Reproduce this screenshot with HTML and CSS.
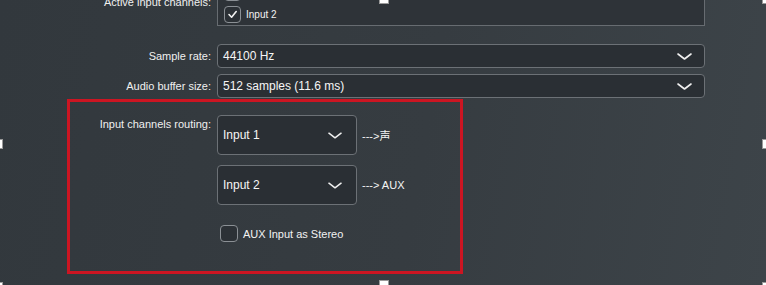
FILE: index.html
```html
<!DOCTYPE html>
<html lang="en">
<head>
  <meta charset="UTF-8" />
  <meta name="viewport" content="width=device-width, initial-scale=1.0" />
  <title>Audio Settings</title>
  <link rel="stylesheet" href="styles.css">
</head>
<body>

  <div class="prefs">
    <div class="row row-active">
      <div class="label label-top">Active input channels:</div>
      <div class="channel-box">
        <label class="check-row">
          <span class="box checked">
            <svg viewBox="0 0 17 17" width="17" height="17"><polyline points="5,8.5 7.6,11.2 12.2,5.6" fill="none" stroke="#f2f2f2" stroke-width="1.6" stroke-linecap="round" stroke-linejoin="round"/></svg>
          </span>
          <span class="check-text small">Input 1</span>
        </label>
        <label class="check-row">
          <span class="box checked">
            <svg viewBox="0 0 17 17" width="17" height="17"><polyline points="5,8.5 7.6,11.2 12.2,5.6" fill="none" stroke="#f2f2f2" stroke-width="1.6" stroke-linecap="round" stroke-linejoin="round"/></svg>
          </span>
          <span class="check-text small">Input 2</span>
        </label>
      </div>
    </div>

    <div class="row row-rate">
      <div class="label">Sample rate:</div>
      <div class="select">
        <span>44100 Hz</span>
        <svg class="chevron" viewBox="0 0 15 7" width="15" height="7"><polyline points="1,1 7.5,6 14,1" fill="none" stroke="#f0f0f0" stroke-width="1.6" stroke-linecap="round" stroke-linejoin="round"/></svg>
      </div>
    </div>

    <div class="row row-buffer">
      <div class="label">Audio buffer size:</div>
      <div class="select">
        <span>512 samples (11.6 ms)</span>
        <svg class="chevron" viewBox="0 0 15 7" width="15" height="7"><polyline points="1,1 7.5,6 14,1" fill="none" stroke="#f0f0f0" stroke-width="1.6" stroke-linecap="round" stroke-linejoin="round"/></svg>
      </div>
    </div>

    <section class="routing">
      <div class="label label-routing">Input channels routing:</div>
      <div class="routes">
        <div class="route">
          <div class="select tall">
            <span>Input 1</span>
            <svg class="chevron" viewBox="0 0 15 7" width="14" height="7"><polyline points="1,1 7.5,6 14,1" fill="none" stroke="#f0f0f0" stroke-width="1.6" stroke-linecap="round" stroke-linejoin="round"/></svg>
          </div>
          <span class="arrow">---&gt;声</span>
        </div>
        <div class="route">
          <div class="select tall">
            <span>Input 2</span>
            <svg class="chevron" viewBox="0 0 15 7" width="14" height="7"><polyline points="1,1 7.5,6 14,1" fill="none" stroke="#f0f0f0" stroke-width="1.6" stroke-linecap="round" stroke-linejoin="round"/></svg>
          </div>
          <span class="arrow">---&gt; AUX</span>
        </div>
        <label class="check-row stereo">
          <span class="box"></span>
          <span class="check-text">AUX Input as Stereo</span>
        </label>
      </div>
    </section>
  </div>

  <!-- selection handles of the screenshot frame -->
  <span class="handle h-tc"></span>
  <span class="handle h-tr"></span>
  <span class="handle h-ml"></span>
  <span class="handle h-mr"></span>
  <span class="handle h-bl"></span>
  <span class="handle h-bc"></span>
  <span class="handle h-br"></span>

</body>
</html>
```

FILE: styles.css
```css
html, body {
  margin: 0;
  width: 766px;
  height: 285px;
  overflow: hidden;
}

body {
  position: relative;
  font-family: "Liberation Sans", Arial, "Noto Sans CJK SC", sans-serif;
  color: #ececec;
  background: linear-gradient(100deg, #32383d 0%, #363c41 55%, #3d4449 100%);
}

.prefs {
  margin-top: -20px;
}

.row {
  display: grid;
  grid-template-columns: 211px 488px;
  column-gap: 6px;
  align-items: center;
}

.label {
  font-size: 11px;
  line-height: 13px;
  text-align: right;
  color: #f0f0f0;
}

.row-active {
  align-items: start;
}

.label-top {
  padding-top: 16px;
}

.channel-box {
  display: flex;
  flex-direction: column;
  gap: 5px;
  padding: 3px 6px 2px 6px;
  border: 1px solid #676c71;
  background-color: #2e3338;
}

.row-rate {
  margin-top: 18px;
}

.row-buffer {
  margin-top: 6px;
}

.select {
  display: flex;
  justify-content: space-between;
  align-items: center;
  box-sizing: border-box;
  height: 24px;
  padding: 0 12px 0 5px;
  border: 1px solid #6c7176;
  border-radius: 4px;
  background-color: #2a2f34;
  font-size: 12px;
  color: #f6f6f6;
}

.select.tall {
  width: 140px;
  height: 40px;
  padding-right: 14px;
}

.chevron {
  display: block;
}

.check-row {
  display: flex;
  align-items: center;
  gap: 5px;
}

.box {
  box-sizing: border-box;
  width: 17px;
  height: 17px;
  border: 1px solid #8b9095;
  border-radius: 4px;
  background-color: #2c3136;
}

.box svg {
  display: block;
  margin: -1px;
}

.check-text {
  font-size: 11px;
  color: #f2f2f2;
}

.check-text.small {
  font-size: 10px;
}

/* annotated routing block */
.routing {
  display: grid;
  grid-template-columns: 141px 240px;
  column-gap: 6px;
  align-items: start;
  box-sizing: border-box;
  width: 396px;
  height: 175px;
  margin: 1px 0 0 67px;
  padding-top: 13px;
  border: 3px solid #cc1522;
}

.label-routing {
  padding-top: 3px;
}

.routes {
  display: flex;
  flex-direction: column;
  gap: 10px;
}

.route {
  display: flex;
  align-items: center;
  gap: 5px;
}

.arrow {
  font-size: 11px;
  color: #f4f4f4;
}

.stereo {
  margin-top: 10px;
  padding-left: 3px;
}

.stereo .box {
  width: 18px;
  height: 17px;
}

.handle {
  position: absolute;
  width: 10px;
  height: 10px;
  box-sizing: border-box;
  background-color: #ffffff;
  border: 1px solid #9a9a9a;
}

.h-tc { left: 379px; top: -6px; }
.h-tr { left: 762px; top: -6px; }
.h-ml { left: -7px; top: 139px; }
.h-mr { left: 762px; top: 139px; }
.h-bl { left: -7px; top: 282px; }
.h-bc { left: 379px; top: 280px; }
.h-br { left: 762px; top: 282px; }
```
